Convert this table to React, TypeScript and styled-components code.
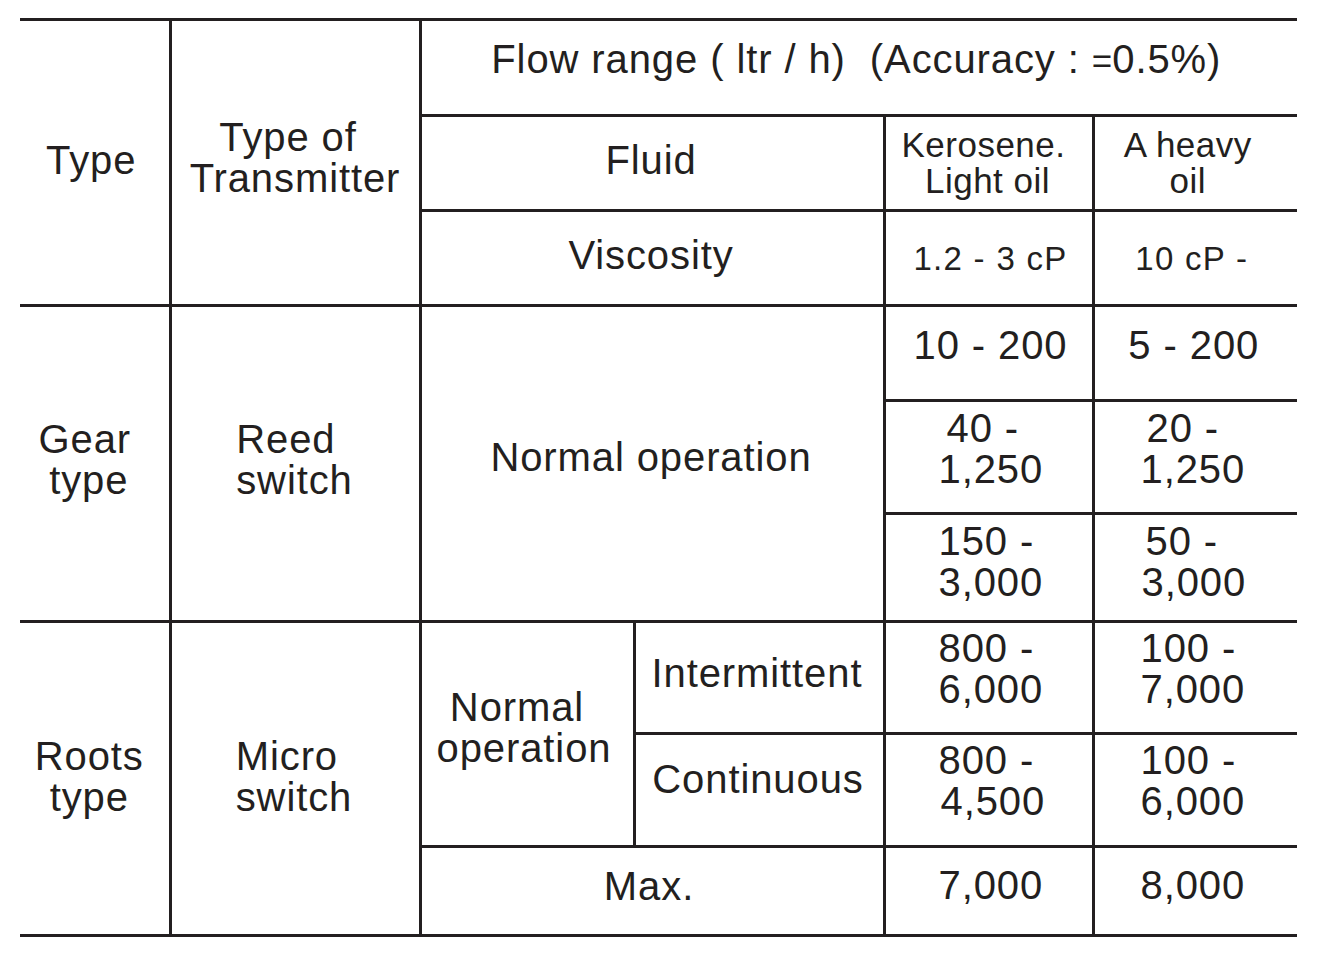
import React from "react";
import styled, { createGlobalStyle } from "styled-components";

const INK = "#231f20";

const Global = createGlobalStyle`
  html, body { margin: 0; padding: 0; background: #ffffff; }
  body {
    font-family: "Liberation Sans", Arial, Helvetica, sans-serif;
    color: ${INK};
  }
`;

const Page = styled.div`
  width: 1318px;
  height: 954px;
  box-sizing: border-box;
  padding: 18px 0 0 20px;
  background: #fff;
`;

const Table = styled.table`
  width: 1277px;
  table-layout: fixed;
  border-collapse: collapse;
  border-top: 3px solid ${INK};
  border-bottom: 3px solid ${INK};
  border-left: hidden;
  border-right: hidden;
`;

const Row = styled.tr<{ $h: number }>`
  height: ${(p) => p.$h}px;
`;

type CellProps = {
  $lift?: number;
  $dx?: number;
  $size?: number;
  $lh?: number;
  $ls?: number;
};

const Cell = styled.td<CellProps>`
  border: 3px solid ${INK};
  padding: 0 ${(p) => Math.max(0, 2 * (p.$dx ?? 0))}px
    ${(p) => 2 * (p.$lift ?? 3)}px
    ${(p) => Math.max(0, -2 * (p.$dx ?? 0))}px;
  vertical-align: middle;
  text-align: center;
  font-size: ${(p) => p.$size ?? 40}px;
  line-height: ${(p) => p.$lh ?? 41}px;
  letter-spacing: ${(p) => p.$ls ?? 0.9}px;
  white-space: pre;
  font-weight: 400;
`;

const NumCell = styled(Cell)<{ $pad: number }>`
  text-align: left;
  padding-left: ${(p) => p.$pad}px;
  padding-right: 0;
`;

const Line = styled.span<{ $in?: number; $pr?: number }>`
  display: block;
  padding-left: ${(p) => p.$in ?? 0}px;
  padding-right: ${(p) => p.$pr ?? 0}px;
`;

const LeftBlock = styled.span`
  display: inline-block;
  text-align: left;
`;

const SmallSign = styled.span`
  font-size: 35px;
  letter-spacing: 0;
`;

const KERO = 53;
const HEAVY = 46;

type NL = { t: string; i?: number };

const Num: React.FC<{ lines: NL[] }> = ({ lines }) => (
  <>
    {lines.map((l, k) => (
      <Line key={k} $in={l.i ?? 0}>
        {l.t}
      </Line>
    ))}
  </>
);

export default function App() {
  return (
    <Page>
      <Global />
      <Table>
        <colgroup>
          <col style={{ width: 150 }} />
          <col style={{ width: 250 }} />
          <col style={{ width: 214 }} />
          <col style={{ width: 250 }} />
          <col style={{ width: 209 }} />
          <col style={{ width: 204 }} />
        </colgroup>
        <tbody>
          <Row $h={96}>
            <Cell rowSpan={3} $lift={2.5} $dx={3}>
              Type
            </Cell>
            <Cell rowSpan={3} $lift={4.5}>
              <Line $pr={14}>Type of</Line>
              <Line>Transmitter</Line>
            </Cell>
            <Cell colSpan={4} $lift={8} $dx={3}>
              {"Flow range ( ltr / h)  (Accuracy : "}
              <SmallSign>=</SmallSign>
              {"0.5%)"}
            </Cell>
          </Row>
          <Row $h={95}>
            <Cell colSpan={2} $lift={2.5} $dx={1}>
              Fluid
            </Cell>
            <Cell $lift={0} $size={35} $lh={36} $ls={0.5}>
              <Line $pr={10}>Kerosene.</Line>
              <Line $pr={2}>Light oil</Line>
            </Cell>
            <Cell $lift={0} $size={35} $lh={36} $ls={0.5} $dx={8}>
              <Line>A heavy</Line>
              <Line>oil</Line>
            </Cell>
          </Row>
          <Row $h={95}>
            <Cell colSpan={2} $lift={2.5} $dx={1}>
              Viscosity
            </Cell>
            <Cell $lift={0} $size={33} $ls={1.3} $dx={-2}>
              1.2 - 3 cP
            </Cell>
            <Cell $lift={0} $size={33} $ls={1.3} $dx={4}>
              10 cP -
            </Cell>
          </Row>
          <Row $h={95}>
            <Cell rowSpan={3} $lift={3.5} $dx={5.5}>
              <Line $pr={8}>Gear</Line>
              <Line>type</Line>
            </Cell>
            <Cell rowSpan={3} $lift={3.5} $dx={0.5}>
              <LeftBlock>
                Reed
                <br />
                switch
              </LeftBlock>
            </Cell>
            <Cell rowSpan={3} colSpan={2} $lift={5.7} $dx={1}>
              Normal operation
            </Cell>
            <Cell $lift={8} $dx={-2}>
              10 - 200
            </Cell>
            <Cell $lift={8} $dx={2}>
              5 - 200
            </Cell>
          </Row>
          <Row $h={113}>
            <NumCell $pad={KERO} $lift={8}>
              <Num lines={[{ t: "40 -", i: 8 }, { t: "1,250", i: -2 }]} />
            </NumCell>
            <NumCell $pad={HEAVY} $lift={8}>
              <Num lines={[{ t: "20 -", i: 6 }, { t: "1,250", i: -2 }]} />
            </NumCell>
          </Row>
          <Row $h={108}>
            <NumCell $pad={KERO} $lift={6}>
              <Num lines={[{ t: "150 -", i: -2 }, { t: "3,000", i: 0 }]} />
            </NumCell>
            <NumCell $pad={HEAVY} $lift={6}>
              <Num lines={[{ t: "50 -", i: 5 }, { t: "3,000", i: 1 }]} />
            </NumCell>
          </Row>
          <Row $h={112}>
            <Cell rowSpan={3} $lift={2} $dx={5}>
              <Line>Roots</Line>
              <Line>type</Line>
            </Cell>
            <Cell rowSpan={3} $lift={2} $dx={1}>
              <LeftBlock>
                Micro
                <br />
                switch
              </LeftBlock>
            </Cell>
            <Cell rowSpan={2} $lift={6} $dx={3}>
              <Line $pr={14}>Normal</Line>
              <Line>operation</Line>
            </Cell>
            <Cell $lift={4} $dx={2}>
              Intermittent
            </Cell>
            <NumCell $pad={KERO} $lift={8.4}>
              <Num lines={[{ t: "800 -" }, { t: "6,000" }]} />
            </NumCell>
            <NumCell $pad={HEAVY} $lift={8.4}>
              <Num lines={[{ t: "100 -", i: -3 }, { t: "7,000" }]} />
            </NumCell>
          </Row>
          <Row $h={113}>
            <Cell $lift={11} $dx={1}>
              Continuous
            </Cell>
            <NumCell $pad={KERO} $lift={9}>
              <Num lines={[{ t: "800 -" }, { t: "4,500", i: 2 }]} />
            </NumCell>
            <NumCell $pad={HEAVY} $lift={9}>
              <Num lines={[{ t: "100 -", i: -3 }, { t: "6,000" }]} />
            </NumCell>
          </Row>
          <Row $h={89}>
            <Cell colSpan={2} $lift={5} $dx={3}>
              Max.
            </Cell>
            <NumCell $pad={KERO} $lift={6}>
              <Num lines={[{ t: "7,000" }]} />
            </NumCell>
            <NumCell $pad={HEAVY} $lift={6}>
              <Num lines={[{ t: "8,000" }]} />
            </NumCell>
          </Row>
        </tbody>
      </Table>
    </Page>
  );
}
